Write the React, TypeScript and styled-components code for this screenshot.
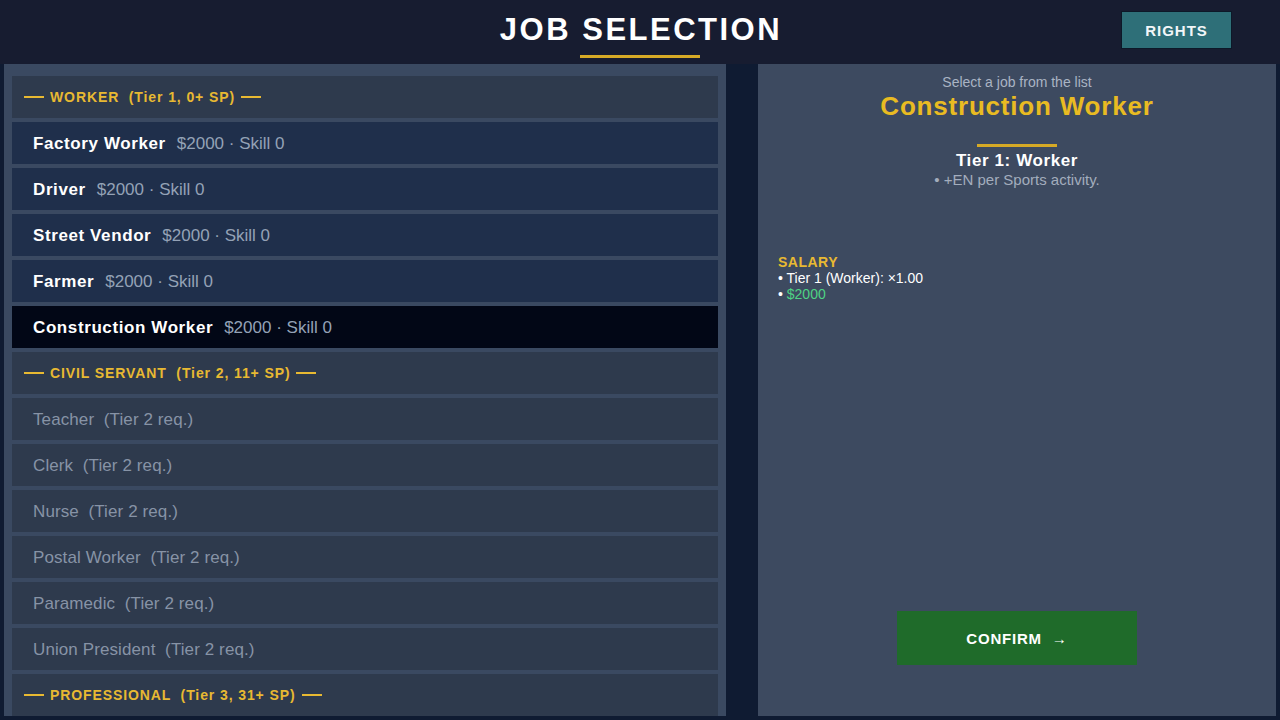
import React from 'react';
import styled, { createGlobalStyle } from 'styled-components';

const GlobalStyle = createGlobalStyle`
    html, body {
        margin: 0;
        padding: 0;
        background: #0f1b32;
        font-family: "Liberation Sans", Arial, sans-serif;
    }
`;

const Screen = styled.div`
    width: 1280px;
    height: 720px;
    display: flex;
    flex-direction: column;
    background: #0f1b32;
    overflow: hidden;
`;

const TopBar = styled.header`
    height: 64px;
    flex-shrink: 0;
    background: #171c30;
    display: grid;
    grid-template-columns: 1fr auto 1fr;
    align-items: start;
    padding: 0 48px;
`;

const TitleBlock = styled.div`
    grid-column: 2;
    display: flex;
    flex-direction: column;
    align-items: center;
    padding-top: 12px;
`;

const Title = styled.h1`
    margin: 0 0 0 2px;
    font-size: 31px;
    line-height: 36px;
    font-weight: 700;
    letter-spacing: 2.5px;
    color: #ffffff;
`;

const TitleBar = styled.div`
    width: 120px;
    height: 3px;
    margin-top: 7px;
    background: #d6aa26;
`;

const RightsButton = styled.button`
    grid-column: 3;
    justify-self: end;
    margin-top: 11px;
    width: 111px;
    height: 38px;
    background: #2e6f78;
    border: 1px solid #0d1828;
    color: #f2f6f8;
    font-family: "Liberation Sans", Arial, sans-serif;
    font-size: 15px;
    font-weight: 700;
    letter-spacing: 1px;
    cursor: pointer;
`;

const Main = styled.main`
    flex: 1;
    display: flex;
    gap: 32px;
    padding: 0 4px 4px 4px;
    min-height: 0;
`;

const ListPanel = styled.section`
    width: 722px;
    flex-shrink: 0;
    background: #3a4961;
    padding: 12px 8px 0 8px;
    box-sizing: border-box;
    display: flex;
    flex-direction: column;
    gap: 4px;
    overflow: hidden;
`;

const Row = styled.div<{ $kind: 'header' | 'job' | 'selected' | 'locked' }>`
    height: 42px;
    flex-shrink: 0;
    display: flex;
    align-items: center;
    box-sizing: border-box;
    padding-top: ${p => (p.$kind === 'header' ? '0' : '2px')};
    padding-left: ${p => (p.$kind === 'header' ? '12px' : '21px')};
    background: ${p =>
        p.$kind === 'job' ? '#1f2f4b' : p.$kind === 'selected' ? '#020716' : '#2e3a4d'};
`;

const GroupLabel = styled.span`
    display: flex;
    align-items: center;
    gap: 6px;
    color: #e8b932;
    font-size: 14px;
    font-weight: 700;
    letter-spacing: 0.9px;
    white-space: pre;
`;

const Dash = styled.span`
    display: inline-block;
    width: 20px;
    height: 2px;
    background: #e8b932;
`;

const JobName = styled.span`
    color: #ffffff;
    font-size: 17px;
    font-weight: 700;
    letter-spacing: 0.6px;
`;

const JobInfo = styled.span`
    margin-left: 11px;
    color: #94a2b6;
    font-size: 17px;
`;

const LockedName = styled.span`
    color: #8793a6;
    font-size: 17px;
    letter-spacing: 0.1px;
    white-space: pre;
`;

const DetailPanel = styled.section`
    flex: 1;
    background: #3d4a60;
    display: flex;
    flex-direction: column;
    padding: 10px 20px 51px 20px;
    box-sizing: border-box;
`;

const Hint = styled.div`
    text-align: center;
    color: #aab4c4;
    font-size: 14px;
    line-height: 16px;
`;

const JobTitle = styled.h2`
    margin: 1px 0 0 0;
    text-align: center;
    color: #e9bb22;
    font-size: 26px;
    line-height: 30px;
    font-weight: 700;
    letter-spacing: 0.8px;
`;

const Divider = styled.div`
    align-self: center;
    width: 80px;
    height: 3px;
    margin-top: 23px;
    background: #d6aa26;
`;

const TierName = styled.div`
    margin-top: 4px;
    text-align: center;
    color: #ffffff;
    font-size: 17px;
    line-height: 20px;
    font-weight: 700;
    letter-spacing: 0.6px;
`;

const TierPerk = styled.div`
    text-align: center;
    color: #a3adbd;
    font-size: 15px;
    line-height: 18px;
`;

const Section = styled.div`
    margin-top: 65px;
    display: flex;
    flex-direction: column;
`;

const SectionTitle = styled.div`
    color: #e8b932;
    font-size: 14px;
    line-height: 16px;
    font-weight: 700;
    letter-spacing: 0.5px;
`;

const SectionLine = styled.div<{ $color?: string }>`
    color: #ffffff;
    font-size: 14px;
    line-height: 16px;
    span {
        color: ${p => p.$color || '#ffffff'};
    }
`;

const ConfirmButton = styled.button`
    margin-top: auto;
    align-self: center;
    width: 240px;
    height: 54px;
    background: #1f6b2a;
    border: none;
    color: #ffffff;
    font-family: "Liberation Sans", Arial, sans-serif;
    font-size: 15px;
    font-weight: 700;
    letter-spacing: 0.8px;
    cursor: pointer;
`;

type Item =
    | { kind: 'header'; label: string; tier: string }
    | { kind: 'job'; name: string; selected?: boolean }
    | { kind: 'locked'; name: string };

const items: Item[] = [
    { kind: 'header', label: 'WORKER', tier: '(Tier 1, 0+ SP)' },
    { kind: 'job', name: 'Factory Worker' },
    { kind: 'job', name: 'Driver' },
    { kind: 'job', name: 'Street Vendor' },
    { kind: 'job', name: 'Farmer' },
    { kind: 'job', name: 'Construction Worker', selected: true },
    { kind: 'header', label: 'CIVIL SERVANT', tier: '(Tier 2, 11+ SP)' },
    { kind: 'locked', name: 'Teacher' },
    { kind: 'locked', name: 'Clerk' },
    { kind: 'locked', name: 'Nurse' },
    { kind: 'locked', name: 'Postal Worker' },
    { kind: 'locked', name: 'Paramedic' },
    { kind: 'locked', name: 'Union President' },
    { kind: 'header', label: 'PROFESSIONAL', tier: '(Tier 3, 31+ SP)' },
];

function App() {
    return (
        <>
            <GlobalStyle />
            <Screen>
                <TopBar>
                    <TitleBlock>
                        <Title>JOB SELECTION</Title>
                        <TitleBar />
                    </TitleBlock>
                    <RightsButton>RIGHTS</RightsButton>
                </TopBar>
                <Main>
                    <ListPanel>
                        {items.map((item, index) => {
                            if (item.kind === 'header') {
                                return (
                                    <Row $kind="header" key={index}>
                                        <GroupLabel>
                                            <Dash />
                                            <span>{item.label}  {item.tier}</span>
                                            <Dash />
                                        </GroupLabel>
                                    </Row>
                                );
                            }
                            if (item.kind === 'job') {
                                return (
                                    <Row $kind={item.selected ? 'selected' : 'job'} key={index}>
                                        <JobName>{item.name}</JobName>
                                        <JobInfo>$2000 · Skill 0</JobInfo>
                                    </Row>
                                );
                            }
                            return (
                                <Row $kind="locked" key={index}>
                                    <LockedName>{item.name}  (Tier 2 req.)</LockedName>
                                </Row>
                            );
                        })}
                    </ListPanel>
                    <DetailPanel>
                        <Hint>Select a job from the list</Hint>
                        <JobTitle>Construction Worker</JobTitle>
                        <Divider />
                        <TierName>Tier 1: Worker</TierName>
                        <TierPerk>• +EN per Sports activity.</TierPerk>
                        <Section>
                            <SectionTitle>SALARY</SectionTitle>
                            <SectionLine>• Tier 1 (Worker): ×1.00</SectionLine>
                            <SectionLine $color="#4fd384">• <span>$2000</span></SectionLine>
                        </Section>
                        <ConfirmButton>CONFIRM&nbsp;&nbsp;→</ConfirmButton>
                    </DetailPanel>
                </Main>
            </Screen>
        </>
    );
}

export default App;
